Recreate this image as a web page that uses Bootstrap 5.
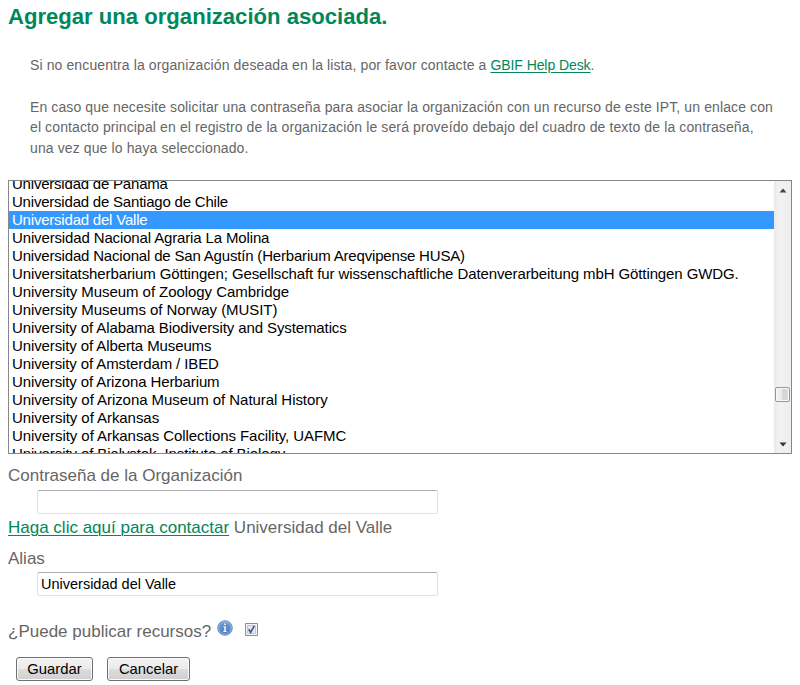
<!DOCTYPE html>
<html lang="es">
<head>
<meta charset="utf-8">
<meta name="viewport" content="width=device-width, initial-scale=1">
<title>Agregar una organización asociada</title>
<link href="https://cdn.jsdelivr.net/npm/bootstrap@5.3.0/dist/css/bootstrap.min.css" rel="stylesheet">
<style>
body{font-family:"Liberation Sans",Arial,sans-serif;color:#666;font-size:17px;line-height:20px;background:#fff;overflow:hidden}
.page{padding:0 8px}
.page a{color:#00875a;text-underline-offset:2px;text-decoration-thickness:1px}
.title{font-size:22.1px;line-height:26px;font-weight:700;color:#00875a;padding-top:4px;white-space:nowrap}
.intro{font-size:14px;line-height:20.6px;padding:25px 0 0 22px;letter-spacing:.112px;white-space:nowrap}
.intro p{margin:0 0 21px}
.intro a{letter-spacing:-.08px}
.orgs{height:274px;border:1px solid #828790;color:#000;font-size:15px;line-height:18px;margin-top:21.6px}
.org-names{margin-top:-6px;white-space:nowrap;letter-spacing:-.06px}
.org-names li{padding-left:3px;height:18px}
.org-names li:nth-child(-n+3){letter-spacing:-.21px}
.org-names li:nth-child(4){letter-spacing:-.14px}
.org-names li:nth-child(5){letter-spacing:-.18px}
.org-names li:nth-child(6){letter-spacing:-.107px}
.org-names li:nth-child(n+9):nth-child(-n+12){letter-spacing:-.11px}
.org-names li:last-child{letter-spacing:-.1px}
.org-names .chosen{background:#39f;color:#fff}
.track{width:17px;background:linear-gradient(90deg,#e8e8e8,#f1f1f1 25%,#eee);padding:7px 0 6px}
.track svg{display:block}
.thumb{width:15px;height:15px;border:1px solid #979797;border-radius:2px;background:linear-gradient(90deg,#f5f5f5,#e8e8e9 48%,#d2d2d4 52%,#dcdcdc);box-shadow:inset 0 0 0 1px #f8f8f8;margin-bottom:40px}
.entry{width:401px;height:24px;border:1px solid #dfe1e8;border-top-color:#abadb3;border-radius:2px;padding:0 3px;margin-left:29px;color:#000;font-size:14.5px;line-height:22px;display:block;outline:0}
.pw-label{padding-top:12px;height:36px}
.contact{padding-top:4px;height:35px}
.alias-label{height:23px}
.publish{height:61px;padding-top:26px}
.info{margin:-2px 0 0 6px}
.tick{margin:1px 0 0 12px}
.actions{padding-left:8px;gap:14px}
.push{width:83px;height:24px;border:1px solid #707070;border-radius:3px;background:linear-gradient(#f2f2f2,#ebebeb 50%,#ddd 51%,#cfcfcf);box-shadow:inset 0 0 0 1px #fafafa;color:#000;font-size:14.8px;line-height:20px;padding:0}
.push-save{width:77px}
</style>
<script src="https://cdn.jsdelivr.net/npm/bootstrap@5.3.0/dist/js/bootstrap.bundle.min.js"></script>
</head>
<body>
<main class="page">
<h1 class="title mb-0">Agregar una organización asociada.</h1>
<div class="intro">
<p>Si no encuentra la organización deseada en la lista, por favor contacte a <a href="#">GBIF Help Desk</a>.</p>
<p class="mb-0">En caso que necesite solicitar una contraseña para asociar la organización con un recurso de este IPT, un enlace con<br>el contacto principal en el registro de la organización le será proveído debajo del cuadro de texto de la contraseña,<br>una vez que lo haya seleccionado.</p>
</div>
<div class="orgs d-flex overflow-hidden">
<ul class="org-names list-unstyled mb-0 flex-grow-1">
<li>Universidad de Panamá</li>
<li>Universidad de Santiago de Chile</li>
<li class="chosen">Universidad del Valle</li>
<li>Universidad Nacional Agraria La Molina</li>
<li>Universidad Nacional de San Agustín (Herbarium Areqvipense HUSA)</li>
<li>Universitatsherbarium Göttingen; Gesellschaft fur wissenschaftliche Datenverarbeitung mbH Göttingen GWDG.</li>
<li>University Museum of Zoology Cambridge</li>
<li>University Museums of Norway (MUSIT)</li>
<li>University of Alabama Biodiversity and Systematics</li>
<li>University of Alberta Museums</li>
<li>University of Amsterdam / IBED</li>
<li>University of Arizona Herbarium</li>
<li>University of Arizona Museum of Natural History</li>
<li>University of Arkansas</li>
<li>University of Arkansas Collections Facility, UAFMC</li>
<li>University of Bialystok, Institute of Biology</li>
</ul>
<div class="track d-flex flex-column align-items-center flex-shrink-0">
<svg width="8" height="5" viewBox="0 0 8 5"><path d="M4 .5 7.5 4.5H.5Z" fill="#444"/></svg>
<div class="thumb mt-auto"></div>
<svg width="8" height="5" viewBox="0 0 8 5"><path d="M.5.5h7L4 4.5Z" fill="#333"/></svg>
</div>
</div>
<form onsubmit="return false">
<label class="pw-label d-block" for="pw">Contraseña de la Organización</label>
<input class="entry" id="pw" type="text">
<div class="contact"><a href="#">Haga clic aquí para contactar</a> Universidad del Valle</div>
<label class="alias-label d-block" for="alias">Alias</label>
<input class="entry" id="alias" type="text" value="Universidad del Valle">
<div class="publish d-flex">
<span>¿Puede publicar recursos?</span>
<svg class="info" width="16" height="16" viewBox="0 0 16 16">
<defs><linearGradient id="blue" x2="0" y2="1"><stop stop-color="#6f9bcf"/><stop offset="1" stop-color="#4a7ebd"/></linearGradient></defs>
<circle cx="8" cy="8" r="7.3" fill="url(#blue)" stroke="#6c95c8"/><circle cx="8" cy="8" r="6.2" fill="none" stroke="#a9c5e6" stroke-width=".8"/>
<path d="M7.2 3.5h1.7v1.6H7.2zM6.4 6.2h2.4v4.9h.9v.9H6.3v-.9h.9V7h-.8z" fill="#f2f7fc"/></svg>
<svg class="tick" width="13" height="13" viewBox="0 0 13 13" role="checkbox" aria-checked="true">
<path d="M.5.5h12v12H.5z" fill="#f4f4f4" stroke="#8e8f8f"/><path d="M2.5 2.5h8v8h-8z" fill="#e5e7ea" stroke="#c5c9cf"/>
<path d="M3.7 6.3 5.6 9.3 9.3 2.8" fill="none" stroke="#3f5a99" stroke-width="1.7"/></svg>
</div>
<div class="actions d-flex">
<button class="push push-save">Guardar</button>
<button class="push">Cancelar</button>
</div>
</form>
</main>
</body>
</html>
